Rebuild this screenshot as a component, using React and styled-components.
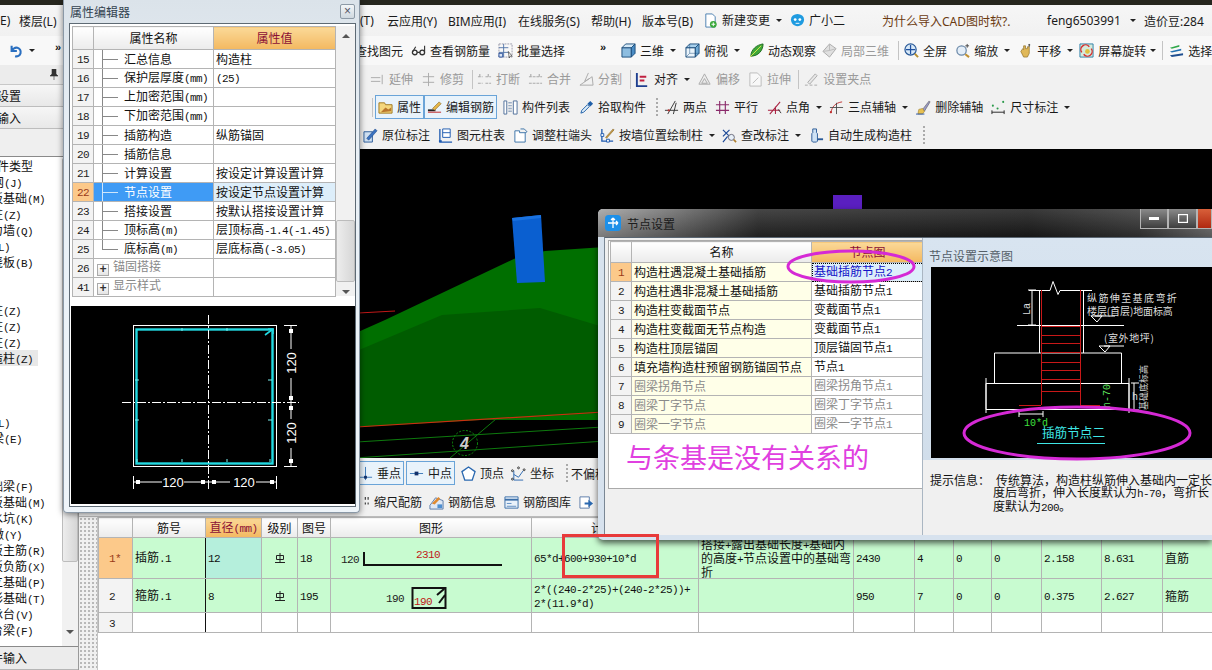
import React from "react";
import styled, { createGlobalStyle } from "styled-components";

const GlobalStyle = createGlobalStyle`
  html, body {
    margin: 0;
    padding: 0;
    background: #f0f0f0;
    overflow: hidden;
    font-family: "Noto Sans CJK SC", sans-serif;
    font-size: 12px;
    color: #111;
  }
`;

const glyphs = {
  undo: <path d="M3 2v6h6M3.5 8A5 5 0 1 1 7 14" stroke="#2a6fc0" strokeWidth="2.4" fill="none" />,
  newdoc: (
    <>
      <path d="M3 1h7l3 3v11H3z" fill="#fff" stroke="#4a7fb0" />
      <circle cx="11" cy="12" r="3.6" fill="#3aa83a" />
      <path d="M9 12h4M11 10v4" stroke="#fff" />
    </>
  ),
  guang: (
    <>
      <path d="M1 7a7 6 0 0 1 14 0c0 4-3 7-7 7S1 11 1 7z" fill="#1f9be0" />
      <circle cx="5.5" cy="7" r="1.5" fill="#fff" />
      <circle cx="10.5" cy="7" r="1.5" fill="#fff" />
      <path d="M6 11h4" stroke="#fff" />
    </>
  ),
  nodeapp: (
    <>
      <rect x="0" y="0" width="16" height="16" rx="3.5" fill="#1e90e8" />
      <path d="M8 3v10M3 8h10M8 3L6 5M8 3l2 2M13 8l-2-2M13 8l-2 2" stroke="#fff" strokeWidth="1.3" fill="none" />
    </>
  ),
  find: (
    <>
      <circle cx="4" cy="10" r="2.5" fill="none" stroke="#333" strokeWidth="1.4" />
      <circle cx="12" cy="10" r="2.5" fill="none" stroke="#333" strokeWidth="1.4" />
      <path d="M6.5 10h3M2 9l3-5M14.5 9V3" stroke="#333" strokeWidth="1.2" />
    </>
  ),
  batch: (
    <>
      <path d="M1 1h14v14H1z" fill="none" stroke="#99a" strokeDasharray="2 1" />
      <path d="M1 5h10M1 10h10M6 1v14" stroke="#5577aa" />
      <path d="M1 11h4v4H1z" fill="#d8e4f4" stroke="#2a4f9a" />
      <path d="M11 9l4 5-2 0-1 2z" fill="#fff" stroke="#333" strokeWidth=".7" />
    </>
  ),
  cube: (
    <>
      <path d="M1 5h10v10H1z" fill="#8dbde0" stroke="#1d4e7c" />
      <path d="M1 5l4-4h10l-4 4z" fill="#d5e9f7" stroke="#1d4e7c" />
      <path d="M11 5l4-4v10l-4 4z" fill="#4a8cc4" stroke="#1d4e7c" />
    </>
  ),
  wire: (
    <>
      <path d="M1 5h10v10H1z" fill="#eaf4fb" stroke="#1d4e7c" />
      <path d="M1 5l4-4h10l-4 4z" fill="#a8d0ec" stroke="#1d4e7c" />
      <path d="M11 5l4-4v10l-4 4z" fill="#6fa9d4" stroke="#1d4e7c" />
      <path d="M5 1v10h10M5 11l-4 4" stroke="#1d4e7c" strokeWidth=".5" fill="none" />
    </>
  ),
  orbit: (
    <>
      <path d="M2 14C2 7 8 2 15 1c0 7-5 13-13 13z" fill="#3fa83a" stroke="#1f6a1f" />
      <path d="M1 15L13 3" stroke="#d8e84a" />
    </>
  ),
  local3d: (
    <>
      <path d="M8 1l7 5-7 9-7-6z" fill="#e0e0e0" stroke="#aaa" />
      <path d="M8 1v7l7-2M8 8L1 9" stroke="#bbb" fill="none" />
    </>
  ),
  full: (
    <>
      <circle cx="7" cy="7" r="6" fill="#d7e8f7" stroke="#2a5a98" strokeWidth="1.3" />
      <path d="M7 2v10M2 7h10" stroke="#1e50a0" strokeWidth="1.3" />
      <path d="M11.5 11.5L15 15" stroke="#b89030" strokeWidth="2" />
    </>
  ),
  zoom: (
    <>
      <circle cx="7" cy="8" r="5" fill="#e4eef8" stroke="#6a88a8" strokeWidth="1.3" />
      <path d="M11 12l4 3" stroke="#c09030" strokeWidth="2.2" />
      <path d="M13 1v4M11 3h4" stroke="#444" />
    </>
  ),
  pan: (
    <>
      <path d="M3 9l2-3 1 1V3h2v3h2V4h2v7l-2 4H6z" fill="#e0b858" stroke="#8a6a20" strokeWidth=".7" />
      <path d="M12 1v3M11 2h2" stroke="#444" />
    </>
  ),
  rotate: (
    <>
      <path d="M1 1h14v14H1z" fill="#d6eadb" stroke="#2a7fa8" />
      <path d="M3 10a5 5 0 0 1 8-6" stroke="#d83030" strokeWidth="1.5" fill="none" />
      <path d="M13 6a5 5 0 0 1-8 6" stroke="#d83030" strokeWidth="1.5" fill="none" />
      <circle cx="9" cy="9" r="2.5" fill="#e0c040" />
    </>
  ),
  layers: (
    <>
      <path d="M1 5l10-3v2L3 6z" fill="#2fa84a" />
      <path d="M1 9l12-3v2L3 10z" fill="#1f6fb0" />
      <path d="M1 13l14-2v2L3 15z" fill="#1f4f90" />
    </>
  ),
  extend: <path d="M1 6h10M1 10h10M13 3v10" stroke="#aaa" strokeWidth="1" fill="none" />,
  trim: <path d="M2 5h12M2 11h12M8 1v14" stroke="#aaa" fill="none" />,
  cut: <path d="M1 5h5M9 5h6M1 12h5M9 12h6M3 2v3M12 2v3" stroke="#aaa" strokeWidth="1.2" strokeDasharray="3 1" fill="none" />,
  merge: <path d="M1 5h14M1 12h14M3 2v3M12 2v3" stroke="#aaa" strokeWidth="1.2" strokeDasharray="3 1" fill="none" />,
  split: <path d="M1 14h14L14 5 1 14M10 1l-4 9 5-3" stroke="#aaa" fill="none" />,
  align: (
    <>
      <path d="M2 1v14h11" stroke="#1e3f90" strokeWidth="2" fill="none" />
      <path d="M5 5h7M5 9h5" stroke="#c02040" strokeWidth="2" />
    </>
  ),
  offset: <path d="M2 13L8 2l6 11zM5 12l3-5 3 5z" fill="#ececec" stroke="#aaa" />,
  stretch: <path d="M2 1h8l4 4v10H2zM5 12l6-6" fill="#f8f8f8" stroke="#bbb" />,
  grip: <path d="M1 14h3M6 14h3M11 14h3M4 11l8-9 2 2-8 9z" fill="#e6e6e6" stroke="#aaa" />,
  prop: (
    <>
      <path d="M1 3h6l1 2h7v9H1z" fill="#f4d67c" stroke="#a07820" />
      <path d="M3 13l5-5 3 2 3-2v4z" fill="#b9762c" />
    </>
  ),
  edit: (
    <>
      <path d="M1 11h8" stroke="#222" strokeWidth="2" />
      <path d="M6 9l7-7 2 2-7 7z" fill="#e8b84a" stroke="#8a6a20" strokeWidth=".7" />
      <path d="M1 13h14" stroke="#c02020" />
    </>
  ),
  list: (
    <>
      <path d="M1 1h3v14H1zM11 1h4v14h-4z" fill="#fff" stroke="#4f6f9a" />
      <path d="M6 3h3M6 6h3M6 9h3M6 12h3" stroke="#4f6f9a" strokeDasharray="1 1" strokeWidth="1.5" />
    </>
  ),
  picker: (
    <>
      <path d="M2 14l1-3 6-6 2 2-6 6z" fill="#dcecf8" stroke="#1f5fa8" />
      <path d="M9 4l3-3 3 3-3 3z" fill="#1f5fa8" />
    </>
  ),
  twopoint: (
    <>
      <path d="M1 11h14M4 15l8-14M10 15L13 3" stroke="#333" fill="none" />
      <circle cx="5" cy="11" r="1.2" fill="#c03030" />
    </>
  ),
  parallel: <path d="M1 5h14M1 11h14M5 1v14M11 1v14" stroke="#8a2a6a" strokeWidth="1.2" fill="none" />,
  angle: (
    <>
      <path d="M1 11h13M3 15l11-13M9 15V7" stroke="#a82040" strokeWidth="1.1" fill="none" />
      <path d="M12 10l3 4" stroke="#333" />
    </>
  ),
  three: (
    <>
      <path d="M2 14C3 7 7 3 14 2" stroke="#c03030" fill="none" />
      <path d="M1 8h14M8 3v12" stroke="#444" strokeWidth=".9" />
      <circle cx="2" cy="13" r="1.2" fill="#c03030" />
    </>
  ),
  del: (
    <>
      <path d="M7 10l7-9 1 1-6 10z" fill="#9a9ac8" stroke="#555" strokeWidth=".6" />
      <path d="M3 10l4-1 2 3-2 3H2z" fill="#e8c050" stroke="#9a7a20" strokeWidth=".6" />
      <path d="M0 15h9" stroke="#2a5ab0" />
    </>
  ),
  dim: (
    <>
      <path d="M1 11v4M14 11v4M1 13h13" stroke="#222" />
      <circle cx="2" cy="6" r="1.1" fill="#2a9a4a" />
      <circle cx="7" cy="9" r="1.1" fill="#2a9a4a" />
      <circle cx="13" cy="2" r="1.1" fill="#2a9a4a" />
    </>
  ),
  inplace: (
    <>
      <path d="M1 4h9v11H1z" fill="#cfe0f2" stroke="#2a5a98" />
      <path d="M4 11l9-10 2 2-9 10z" fill="#3a72c0" stroke="#1e4a88" strokeWidth=".6" />
    </>
  ),
  coltable: (
    <>
      <path d="M2 1v14h13" stroke="#1e5ab0" strokeWidth="1.4" fill="none" />
      <path d="M5 1h8v9H5z" fill="#fff" stroke="#1e5ab0" />
      <path d="M5 5h8" stroke="#1e5ab0" />
      <path d="M1 13h3v2H1z" fill="#1e5ab0" />
    </>
  ),
  adjust: (
    <>
      <path d="M2 3h5v2h6v10H2z" fill="#fff" stroke="#3a72a8" />
      <path d="M8 1h4l3 3-2 1" stroke="#3a72a8" fill="none" />
    </>
  ),
  wallcol: (
    <>
      <path d="M2 1v13h12" stroke="#1e5ab0" strokeWidth="1.4" fill="none" />
      <path d="M1 6h3v3H1zM7 12h3v3H7z" fill="#fff" stroke="#1e5ab0" />
      <path d="M6 10l8-9 1 1-8 9z" fill="#d0a040" stroke="#7a5a20" strokeWidth=".6" />
    </>
  ),
  check: (
    <>
      <path d="M1 2l7 7M8 2L1 9M1 15l5-6" stroke="#1e4a98" strokeWidth="1.3" />
      <circle cx="10" cy="10" r="3.2" fill="#e8f0f8" stroke="#667" />
      <path d="M12.5 12.5L15 15" stroke="#b08030" strokeWidth="1.8" />
    </>
  ),
  autogen: (
    <>
      <path d="M4 1h4v4l1 1v8l-1 1H4l-1-1V6l1-1z" fill="#cfe2f4" stroke="#2a5a98" />
      <path d="M9 12h6" stroke="#2a5a98" strokeWidth="2" />
    </>
  ),
  perp: (
    <>
      <path d="M8 1v14M1 12h14" stroke="#3a78b8" />
      <rect x="6.5" y="10.5" width="3" height="3" fill="#12306a" />
    </>
  ),
  mid: (
    <>
      <path d="M1 8h14" stroke="#3a78b8" />
      <rect x="6" y="6" width="4" height="4" fill="#12306a" />
    </>
  ),
  vertex: <path d="M8 1l7 5-3 9H4L1 6z" fill="#fff" stroke="#2a68b0" strokeWidth="1.4" />,
  coord: (
    <>
      <path d="M3 15V5M3 15h10M3 9l5 3 5-7" stroke="#2a68b0" fill="none" />
      <circle cx="8" cy="2" r="1" fill="none" stroke="#333" />
      <circle cx="1.5" cy="5" r="1" fill="none" stroke="#333" />
      <circle cx="14" cy="4" r="1" fill="none" stroke="#333" />
      <circle cx="1.5" cy="14" r="1" fill="none" stroke="#333" />
    </>
  ),
  scale: <path d="M11 2v3M14 2v3M11 8v2M14 8v2" stroke="#333" strokeWidth="1.2" />,
  info: (
    <>
      <path d="M1 11L7 3l8 3v9H1z" fill="#dfe8f4" stroke="#5a7aa8" />
      <path d="M3 9l7-7 2 2-6 6z" fill="#e08a30" />
      <path d="M9 10h5v4H9z" fill="#4f8fd0" />
    </>
  ),
  lib: (
    <>
      <path d="M1 2h14v12H1z" fill="#eaf2fa" stroke="#3a6ea8" />
      <path d="M1 5h14" stroke="#3a6ea8" strokeWidth="2" />
      <path d="M3 9h5M3 12h10" stroke="#5a8abf" />
    </>
  ),
  next: (
    <>
      <path d="M1 2h10v12H1z" fill="#fff" stroke="#5a7aa8" />
      <path d="M6 8h4V5l5 4-5 4v-3H6z" fill="#2a68b0" />
    </>
  ),
};

const Glyph = styled.svg`
  flex: none;
  display: block;
  width: ${(p) => p.$size || 15}px;
  height: ${(p) => p.$size || 15}px;
`;

const Icon = ({ name, size }) => (
  <Glyph $size={size} viewBox="0 0 16 16">
    {glyphs[name]}
  </Glyph>
);

const Page = styled.div`
  position: relative;
  width: 1212px;
  height: 670px;
  overflow: hidden;
  display: flex;
  flex-direction: column;
  background: #f0f0f0;
`;

const TitleStrip = styled.div`
  height: 5px;
  flex: none;
  background: #26261e;
`;

const MenuBar = styled.div`
  height: 31px;
  flex: none;
  display: flex;
  align-items: center;
  background: linear-gradient(#f6f6f6, #f1f1f1);
  font-family: "Noto Sans", "Noto Sans CJK SC", sans-serif;
`;

const MenuItem = styled.span`
  flex: none;
  width: ${(p) => p.$w}px;
  margin-left: ${(p) => p.$ml || 0}px;
  white-space: nowrap;
  color: ${(p) => p.$color || "#1a1a1a"};
`;

const ToolRow = styled.div`
  height: ${(p) => p.$h || 28}px;
  flex: none;
  display: flex;
  align-items: center;
  padding-left: ${(p) => p.$pl || 0}px;
  background: ${(p) => p.$bg || "#f1f1f1"};
  white-space: nowrap;
  overflow: hidden;
`;

const ToolItem = styled.div`
  flex: none;
  display: flex;
  align-items: center;
  gap: 4px;
  height: 24px;
  box-sizing: border-box;
  margin-left: ${(p) => (p.$ml === undefined ? 8 : p.$ml)}px;
  padding: ${(p) => (p.$on ? "0 3px" : "0")};
  color: ${(p) => (p.$off ? "#9a9a9a" : "#1a1a1a")};
  background: ${(p) => (p.$on ? "#e9f3fb" : "transparent")};
  ${(p) => p.$on && "outline: 1px solid #6aa4d8; outline-offset: -1px;"}
  line-height: 24px;
`;

const Caret = styled.i`
  flex: none;
  width: 0;
  height: 0;
  margin-left: ${(p) => (p.$ml === undefined ? 2 : p.$ml)}px;
  border-left: 3px solid transparent;
  border-right: 3px solid transparent;
  border-top: 3px solid #222;
`;

const Sep = styled.i`
  flex: none;
  width: 1px;
  height: 19px;
  margin-left: ${(p) => p.$ml}px;
  background: #c4c4c4;
`;

const Dots = styled.i`
  flex: none;
  width: 2px;
  height: 18px;
  margin-left: ${(p) => p.$ml}px;
  background: repeating-linear-gradient(#aaa 0 2px, transparent 2px 4px);
`;

const More = styled.span`
  flex: none;
  width: 8px;
  margin-left: ${(p) => p.$ml}px;
  font-family: "Liberation Sans", sans-serif;
  font-size: 11px;
  font-weight: bold;
  line-height: 8px;
  margin-top: -8px;
`;

const Tool = ({ icon, label, ml, off, on, caret, caretMl }) => (
  <ToolItem $ml={ml} $off={off} $on={on}>
    <Icon name={icon} />
    <span>{label}</span>
    {caret && <Caret $ml={caretMl} />}
  </ToolItem>
);

const Body = styled.div`
  flex: 1;
  display: flex;
  min-height: 0;
`;

const LeftPanel = styled.div`
  width: 79px;
  flex: none;
  display: flex;
  flex-direction: column;
  overflow: hidden;
  border-right: 1px solid #9a9a9a;
  box-sizing: border-box;
`;

const PanelHead = styled.div`
  height: 19px;
  flex: none;
  display: flex;
  justify-content: flex-end;
  align-items: center;
  padding-right: 20px;
  background: #ececec;
  border-bottom: 1px solid #c8c8c8;
  font-size: 10px;
`;

const PanelTab = styled.div`
  height: 21px;
  flex: none;
  line-height: 21px;
  text-indent: -3px;
  background: linear-gradient(#f6f6f6, #e8e8e8);
  border-bottom: 1px solid #bdbdbd;
`;

const PanelGap = styled.div`
  height: 27px;
  flex: none;
  background: #efefef;
  border-bottom: 1px solid #8a8a8a;
`;

const ListWrap = styled.div`
  flex: 1;
  min-height: 0;
  display: flex;
  background: #fff;
  padding-top: 1px;
  border-bottom: 1px solid #8a8a8a;
`;

const TreeList = styled.div`
  flex: 1;
  min-width: 0;
  overflow: hidden;
`;

const TreeRow = styled.div`
  height: 16px;
  line-height: 16px;
  white-space: nowrap;
  width: ${(p) => (p.$sel ? "38px" : "auto")};
  background: ${(p) => (p.$sel ? "#e8e8e8" : "transparent")};
  span.t {
    margin-left: ${(p) => p.$ml || 0}px;
  }
`;

const ScrollTrack = styled.div`
  width: ${(p) => p.$w || 16}px;
  flex: none;
  display: flex;
  flex-direction: column;
  align-items: center;
  background: #f1f1f1;
  overflow: hidden;
`;

const ScrollThumb = styled.div`
  width: 100%;
  flex: none;
  box-sizing: border-box;
  height: ${(p) => p.$h}px;
  margin-top: ${(p) => p.$mt}px;
  background: linear-gradient(90deg, #ededed, #d6d6d6);
  border: 1px solid #bcbcbc;
  border-radius: 2px;
`;

const ScrollCaret = styled.i`
  flex: none;
  margin-top: ${(p) => p.$mt}px;
  width: 0;
  height: 0;
  border-left: 4px solid transparent;
  border-right: 4px solid transparent;
  ${(p) => (p.$up ? "border-bottom: 4px solid #555;" : "border-top: 4px solid #555;")}
`;

const PanelButton = styled.div`
  height: 22px;
  flex: none;
  line-height: 22px;
  text-indent: -9px;
  background: #ececec;
  border-bottom: 1px solid #b5b5b5;
`;

const Center = styled.div`
  flex: 1;
  min-width: 0;
  display: flex;
  flex-direction: column;
`;

const Canvas = styled.div`
  height: 309px;
  flex: none;
  background: #000;
  svg {
    display: block;
  }
`;

const TableArea = styled.div`
  flex: 1;
  min-height: 0;
  display: flex;
  align-items: flex-start;
  background: #fff;
  border-top: 1px solid #bbb;
`;

const Grip = styled.div`
  width: 19px;
  height: 100%;
  flex: none;
  background: #f0f0f0 radial-gradient(#b8b8b8 1px, transparent 1.2px) 0 0 / 4px 4px;
  border-right: 1px solid #c4c4c4;
  box-sizing: border-box;
`;

const Grid = styled.table`
  table-layout: fixed;
  border-collapse: collapse;
  width: ${(p) => p.$w}px;
  background: ${(p) => p.$bg || "#fff"};
  flex: none;
  align-self: flex-start;
  th,
  td {
    padding: 0 2px;
    border: 1px solid #b4b4b4;
    overflow: hidden;
    white-space: nowrap;
    font-weight: normal;
    line-height: 12px;
    font-size: 12px;
    box-sizing: border-box;
  }
`;

const HeadCell = styled.th`
  text-align: center;
  height: ${(p) => p.$h || 20}px;
  color: ${(p) => (p.$active ? "#8b1035" : "#111")};
  background: ${(p) =>
    p.$active ? "linear-gradient(#fbd998, #f3b860)" : "linear-gradient(#fff, #ebebeb)"};
`;

const NumCell = styled.td`
  text-align: ${(p) => (p.$pl ? "left" : "center")};
  ${(p) => p.$pl && `padding-left: ${p.$pl}px !important;`}
  background: ${(p) => (p.$active ? "#fcc98a" : "#f3f3f3")};
  color: ${(p) => (p.$active ? "#9a3a18" : "#222")};
`;

const GreenCell = styled.td`
  background: ${(p) => (p.$tint ? "#b5efdc" : "#c8fbd0")};
  ${(p) => p.$edge && "border-right: 1px solid #111 !important;"}
  svg {
    display: block;
  }
`;

const BlankCell = styled.td`
  background: #fff;
  ${(p) => p.$edge && "border-right: 1px solid #111 !important;"}
`;

const Row = styled.tr`
  height: ${(p) => p.$h}px;
`;

const GradeMark = styled.svg`
  display: block;
  width: 12px;
  height: 12px;
  margin: 0 auto;
`;

const Latin = styled.span`
  font-family: "Liberation Mono", monospace;
  font-size: 11px;
  letter-spacing: -0.6px;
`;

const Mix = ({ children }) => (
  <>
    {String(children)
      .split(/([\x20-\x7e]+)/)
      .map((s, i) => (/[\x20-\x7e]/.test(s) ? <Latin key={i}>{s}</Latin> : s))}
  </>
);

const Dialog = styled.div`
  position: absolute;
  box-sizing: border-box;
  display: flex;
  flex-direction: column;
  left: ${(p) => p.$x}px;
  top: ${(p) => p.$y}px;
  width: ${(p) => p.$w}px;
  height: ${(p) => p.$h}px;
`;

const PropDialog = styled(Dialog)`
  padding: 0 3px 5px 5px;
  background: linear-gradient(#dbe3ea, #e9f0f6 30%, #eef4f9);
  border: 1px solid #8a98a6;
  border-top: none;
  border-radius: 0 0 4px 4px;
  box-shadow: 0 1px 6px rgba(0, 0, 0, 0.5);
`;

const PropTitle = styled.div`
  height: 23px;
  flex: none;
  display: flex;
  align-items: center;
  justify-content: space-between;
  padding-left: 1px;
  color: #33424f;
`;

const CloseBox = styled.div`
  width: 15px;
  height: 15px;
  margin-right: 1px;
  box-sizing: border-box;
  border: 1px solid #8d9aa6;
  border-radius: 2px;
  background: linear-gradient(#f3f6f8, #cfd8df);
  color: #556;
  font-family: "Liberation Sans", sans-serif;
  font-size: 12px;
  line-height: 12px;
  text-align: center;
`;

const PropInner = styled.div`
  flex: 1;
  min-height: 0;
  display: flex;
  flex-direction: column;
  background: #fff;
  border: 1px solid #5e6a74;
  padding: 2px 0 2px 2px;
`;

const PropTop = styled.div`
  height: 270px;
  flex: none;
  display: flex;
  justify-content: space-between;
`;

const TreeCell = styled.td`
  position: relative;
  padding-left: 30px !important;
  background: ${(p) => (p.$sel ? "#3f9bf5" : "#fff")};
  color: ${(p) => (p.$sel ? "#fff" : "#111")};
  &::before {
    content: "";
    position: absolute;
    left: 8px;
    top: 0;
    bottom: ${(p) => (p.$last ? "50%" : "0")};
    width: 1px;
    background: ${(p) => (p.$sel ? "#cfe6fb" : "#888")};
  }
  &::after {
    content: "";
    position: absolute;
    left: 8px;
    top: 50%;
    width: 16px;
    height: 1px;
    background: ${(p) => (p.$sel ? "#cfe6fb" : "#888")};
  }
`;

const GroupCell = styled.td`
  color: #888;
`;

const PlusBox = styled.span`
  display: inline-block;
  box-sizing: border-box;
  width: 12px;
  height: 12px;
  margin: 0 4px 0 1px;
  vertical-align: -2px;
  border: 1px solid #aaa;
  background: linear-gradient(#fff, #e4e4e4);
  color: #333;
  font-family: "Liberation Mono", monospace;
  font-size: 12px;
  line-height: 10px;
  text-align: center;
  font-weight: bold;
`;

const ValueCell = styled.td`
  background: ${(p) => (p.$sel ? "#ddeefa" : "#fff")};
  color: ${(p) => p.$color || "#111"};
  ${(p) => p.$focus && "outline: 1px dotted #000; outline-offset: -1px;"}
`;

const NameCell = styled.td`
  background: #ffffe8;
  color: ${(p) => p.$color || "#111"};
`;

const Preview = styled.div`
  flex: 1;
  min-height: 0;
  margin: 10px 0 0 -1px;
  background: #000;
  svg {
    display: block;
  }
`;

const NodeDialog = styled(Dialog)`
  background: #d7e2ee;
  box-shadow: 0 3px 6px rgba(0, 0, 0, 0.65);
  border-radius: 5px 0 0 5px;
  padding-bottom: 5px;
`;

const NodeTitle = styled.div`
  height: 28px;
  flex: none;
  display: flex;
  align-items: center;
  padding-left: 7px;
  gap: 6px;
  border-radius: 5px 0 0 0;
  color: #1c1c1c;
  background: linear-gradient(rgba(255, 255, 255, 0.12), rgba(0, 0, 0, 0.25)),
    linear-gradient(90deg, #a4a4a4, #6f6f6f 12%, #2c2c2c 26%, #1e1e1e 70%, #3a3a3a 88%, #777);
`;

const WinButtons = styled.div`
  display: flex;
  margin-left: auto;
  height: 20px;
  align-self: flex-start;
`;

const WinButton = styled.div`
  width: ${(p) => p.$w}px;
  box-sizing: border-box;
  display: flex;
  align-items: center;
  justify-content: center;
  border: 1px solid #b4b4b4;
  border-top: none;
  background: ${(p) =>
    p.$close ? "linear-gradient(#d8603a, #b02810)" : "linear-gradient(#8a8a8a, #3e3e3e)"};
`;

const NodeInner = styled.div`
  flex: 1;
  min-height: 0;
  display: flex;
  margin-left: 6px;
  border-left: 1px solid #7a8794;
  border-top: 1px solid #5a6672;
  background: #f0f0f0;
`;

const NodeLeft = styled.div`
  width: 317px;
  flex: none;
  padding: 2px 0 0 3px;
  box-sizing: border-box;
`;

const NodeSheet = styled.div`
  height: 249px;
  box-sizing: border-box;
  background: #fff;
  border: 1px solid #aaa;
  border-right: none;
  padding-left: 1px;
`;

const Slogan = styled.div`
  margin: 9px 0 0 16px;
  font-size: 27px;
  line-height: 28px;
  color: #e040e0;
  white-space: nowrap;
`;

const NodeRight = styled.div`
  flex: 1;
  min-width: 0;
  display: flex;
  flex-direction: column;
  border-left: 1px solid #aab6c2;
  background: linear-gradient(#d8e4f0, #cfdce9);
`;

const DiagramLabel = styled.div`
  height: 29px;
  flex: none;
  line-height: 35px;
  padding-left: 6px;
  color: #555f68;
`;

const Diagram = styled.div`
  height: 191px;
  flex: none;
  margin-left: 8px;
  background: #000;
  svg {
    display: block;
  }
`;

const InfoBlock = styled.div`
  flex: 1;
  min-height: 0;
  display: flex;
  background: #f0f0f0;
  margin-top: 2px;
  padding: 14px 0 0 7px;
  white-space: nowrap;
  line-height: 12px;
`;

const InfoText = styled.div`
  margin-left: 3px;
`;

const InfoIndent = styled.span`
  margin-left: 3px;
`;

const Overlay = styled.svg`
  position: absolute;
  left: 0;
  top: 0;
  width: 1212px;
  height: 670px;
  pointer-events: none;
`;

const Mark = () => (
  <GradeMark viewBox="0 0 12 12">
    <path d="M2.5 3.5h7v4h-7zM6 1v9M1 10.5h10" fill="none" stroke="#222" strokeWidth="1" />
  </GradeMark>
);

const leftRows = [
  ["构件类型", -15], ["钢筋网(J)", -32], ["筏板基础(M)", -21], ["框柱(Z)", -21], ["剪力墙(Q)", -21], ["梁(L)", -20], ["现浇板(B)", -21],
  null, null,
  ["框柱(Z)", -21], ["暗柱(Z)", -21], ["端柱(Z)", -21], ["构造柱(Z)", -21, true],
  null, null, null,
  ["梁(L)", -20], ["连梁(E)", -20],
  null, null,
  ["基础梁(F)", -21], ["筏板基础(M)", -21], ["集水坑(K)", -21], ["柱墩(Y)", -20], ["筏板主筋(R)", -21], ["筏板负筋(X)", -21], ["独立基础(P)", -21], ["条形基础(T)", -21], ["桩承台(V)", -21], ["承台梁(F)", -21],
];

const propRows = [
  ["15", "汇总信息", "构造柱"],
  ["16", "保护层厚度(mm)", "(25)"],
  ["17", "上加密范围(mm)", ""],
  ["18", "下加密范围(mm)", ""],
  ["19", "插筋构造", "纵筋锚固"],
  ["20", "插筋信息", ""],
  ["21", "计算设置", "按设定计算设置计算"],
  ["22", "节点设置", "按设定节点设置计算"],
  ["23", "搭接设置", "按默认搭接设置计算"],
  ["24", "顶标高(m)", "层顶标高-1.4(-1.45)"],
  ["25", "底标高(m)", "层底标高(-3.05)"],
];

const nodeRows = [
  ["构造柱遇混凝土基础插筋", "基础插筋节点2"],
  ["构造柱遇非混凝土基础插筋", "基础插筋节点1"],
  ["构造柱变截面节点", "变截面节点1"],
  ["构造柱变截面无节点构造", "变截面节点1"],
  ["构造柱顶层锚固", "顶层锚固节点1"],
  ["填充墙构造柱预留钢筋锚固节点", "节点1"],
  ["圈梁拐角节点", "圈梁拐角节点1", true],
  ["圈梁丁字节点", "圈梁丁字节点1", true],
  ["圈梁一字节点", "圈梁一字节点1", true],
];

const rebarCols = [34, 73, 56, 36, 33, 201, 167, 155, 61, 39, 38, 50, 60, 61, 50];
const rebarHeads = ["", "筋号", "直径(mm)", "级别", "图号", "图形", "计算公式", "公式描述", "长度", "根数", "搭接", "损耗(%)", "单重(kg)", "总重(kg)", "钢筋归类"];

const StirrupShape = () => (
  <svg width="197" height="32" viewBox="332 579 197 32">
    <text x="385" y="601" fontSize="11" fontFamily="Liberation Mono" fill="#222" letterSpacing="-.6">190</text>
    <path d="M411.5 587h33v20h-33z M436 594l7-6 M438 602l6-8" fill="none" stroke="#111" strokeWidth="2" />
    <text x="413" y="604" fontSize="11" fontFamily="Liberation Mono" fill="#c01818" letterSpacing="-.6">190</text>
  </svg>
);

const DowelShape = () => (
  <svg width="197" height="38" viewBox="332 539 197 38">
    <text x="340" y="563" fontSize="11" fontFamily="Liberation Mono" fill="#222" letterSpacing="-.6">120</text>
    <path d="M363 552v13h138" fill="none" stroke="#111" strokeWidth="2" />
    <text x="415" y="558" fontSize="11" fontFamily="Liberation Mono" fill="#c01818" letterSpacing="-.6">2310</text>
  </svg>
);

const Viewport = () => (
  <svg width="1133" height="309" viewBox="79 149 1133 309">
    <rect x="833" y="195" width="29" height="20" fill="#5a1fc0" />
    <path d="M340 340L385 320 516 258 545 251 620 246V420H340z" fill="#006f00" />
    <path d="M340 358L442 315 540 308 620 332V412L340 428z" fill="#005c00" />
    <path d="M340 314L395 311" stroke="#c01818" fill="none" />
    <path d="M340 428L620 411" stroke="#c83010" fill="none" strokeWidth="1.2" />
    <path d="M340 443L620 426M340 459L620 440M450 458L496 419" stroke="#0e7a0e" fill="none" />
    <path d="M512 218L541 215 545 282 517 283z" fill="#0a5fd0" />
    <path d="M512 218L541 215 541 218 513 221z" fill="#1a72e0" />
    <circle cx="465" cy="443" r="12.5" fill="none" stroke="#0e8a0e" strokeDasharray="2 1.5" />
    <text x="460" y="449" fontSize="16" fontStyle="italic" fontWeight="bold" fontFamily="Liberation Sans" fill="#ccc">4</text>
  </svg>
);

const SectionDrawing = () => (
  <svg width="284" height="199" viewBox="71 306 284 199">
    <rect x="133.5" y="325.5" width="143" height="141" fill="none" stroke="#fff" />
    <rect x="136.5" y="329.5" width="136" height="134" fill="none" stroke="#22d8e0" strokeWidth="2.4" />
    <path d="M265 335l8-6M268 329h5v5" fill="none" stroke="#22d8e0" strokeWidth="1.6" />
    <path d="M208.5 315V491M122 402.5H299" stroke="#fff" strokeDasharray="9 2 2 2" fill="none" />
    <path d="M182 328v3M227 328v3M135 380h4M268 380h4M135 420h4M268 420h4M182 459v3M227 459v3M137 459v3M270 459v3" stroke="#7df0f0" />
    <path d="M284 325.5h13M284 466.5h13M291 325v24M291 378v41M291 448v18" stroke="#fff" fill="none" />
    <path d="M133.5 476v13M276.5 476v13M134 482h28M184 482h24M208 482h22M256 482h21" stroke="#fff" fill="none" />
    <path d="M289 329h4v4h-4zM289 396h4v4h-4zM289 406h4v4h-4zM289 459h4v4h-4zM136 480h4v4h-4zM201 480h4v4h-4zM212 480h4v4h-4zM270 480h4v4h-4z" fill="#fff" />
    <g fontFamily="Liberation Sans" fontSize="13" fill="#fff" textAnchor="middle">
      <text x="173" y="487">120</text>
      <text x="244" y="487">120</text>
      <text transform="translate(296 363) rotate(-90)">120</text>
      <text transform="translate(296 433) rotate(-90)">120</text>
    </g>
  </svg>
);

const NodeDrawing = () => (
  <svg width="281" height="191" viewBox="931 267 281 191">
    <g fill="none" stroke="#fff">
      <path d="M1029 290.5h21l3-9 5 13 2-4h32M1039.5 290v63M1083.5 290v63M1017 325.5h107" />
      <path d="M994.5 383v-30h127v30M986 383.5h143v26H986z" />
      <path d="M986 378v35M1129 378v35M1032 290v35M1028 290h8M1028 325h8" />
      <path d="M1134 383v27M1131 383h8M1131 410h8M1019 414h24M1019 411v6M1043 411v6" />
      <path d="M1097 322l5-6h-11zM1105 352l5-6h-11zM1095 316h20M1104 346h20" />
    </g>
    <path
      d="M1041.5 290v115M1080.5 290v115M1041 326.5h39M1041 335.5h39M1041 343.5h39M1041 352.5h39M1041 362.5h39M1041 370.5h39M1041 379.5h39M1041 391.5h39M1019 405.5h22M1080 405.5h20"
      fill="none"
      stroke="#c81818"
    />
    <g fontFamily="Noto Sans CJK SC" fontSize="10" fill="#ddd">
      <text x="1087" y="302" letterSpacing="1.4">纵筋伸至基底弯折</text>
      <text x="1087" y="315" letterSpacing="-.1">楼层(首层)地面标高</text>
      <text x="1104" y="342" letterSpacing=".6">(室外地坪)</text>
      <text transform="translate(1030 315) rotate(-90)" fontFamily="Liberation Mono">La</text>
      <text transform="translate(1147 410) rotate(-90)" fontSize="9">基础底标高</text>
      <text x="1132" y="400" fontFamily="Liberation Mono">h</text>
    </g>
    <text transform="translate(1110 408) rotate(-90)" fontSize="10" fontFamily="Liberation Mono" fill="#5de05d">h-70</text>
    <text x="1024" y="426" fontSize="10" fontFamily="Liberation Mono" fill="#3fe03f">10*d</text>
    <text x="1042" y="437" fontSize="12.6" fontFamily="Noto Sans CJK SC" fill="#3fe6e6">插筋节点二</text>
    <path d="M1037 443.5h68" stroke="#3fe6e6" />
  </svg>
);

const App = () => (
  <Page>
    <GlobalStyle />
    <TitleStrip />
    <MenuBar>
      <MenuItem $w={19}>E)</MenuItem>
      <MenuItem $w={38}>楼层(L)</MenuItem>
      <MenuItem $ml={303} $w={27}>(T)</MenuItem>
      <MenuItem $w={61}>云应用(Y)</MenuItem>
      <MenuItem $w={70}>BIM应用(I)</MenuItem>
      <MenuItem $w={73}>在线服务(S)</MenuItem>
      <MenuItem $w={51}>帮助(H)</MenuItem>
      <MenuItem $w={61}>版本号(B)</MenuItem>
      <Tool icon="newdoc" label="新建变更" ml={0} caret caretMl={2} />
      <Tool icon="guang" label="广小二" ml={8} />
      <MenuItem $ml={37} $w={165} $color="#6b3a10">为什么导入CAD图时软?.</MenuItem>
      <MenuItem $w={75}>feng6503991</MenuItem>
      <Caret $ml={8} />
      <MenuItem $ml={8} $w={62}>造价豆:284</MenuItem>
    </MenuBar>

    <ToolRow $h={29} $pl={9} $bg="#f8f8f8">
      <Icon name="undo" size={14} />
      <Caret $ml={6} />
      <More $ml={20}>»</More>
      <Tool icon="find" label="查找图元" ml={273} />
      <Tool icon="find" label="查看钢筋量" />
      <Tool icon="batch" label="批量选择" />
      <More $ml={35}>»</More>
      <Tool icon="cube" label="三维" ml={13} caret />
      <Tool icon="wire" label="俯视" ml={9} caret />
      <Tool icon="orbit" label="动态观察" ml={9} />
      <Tool icon="local3d" label="局部三维" ml={6} off />
      <Sep $ml={9} />
      <Tool icon="full" label="全屏" ml={5} />
      <Tool icon="zoom" label="缩放" caret />
      <Tool icon="pan" label="平移" ml={8} caret />
      <Tool icon="rotate" label="屏幕旋转" ml={6} caret caretMl={0} />
      <Sep $ml={6} />
      <Tool icon="layers" label="选择" ml={6} />
    </ToolRow>

    <Body>
      <LeftPanel>
        <PanelHead>
          <svg width="8" height="11" viewBox="0 0 8 11">
            <path d="M2 0h4v5l2 2H0l2-2zM4 7v4" fill="#333" stroke="#333" strokeWidth=".6" />
          </svg>
        </PanelHead>
        <PanelTab>设置</PanelTab>
        <PanelTab>输入</PanelTab>
        <PanelGap />
        <ListWrap>
          <TreeList>
            {leftRows.map((row, i) =>
              row ? (
                <TreeRow key={i} $ml={row[1]} $sel={row[2]}>
                  <span className="t">
                    <Mix>{row[0]}</Mix>
                  </span>
                </TreeRow>
              ) : (
                <TreeRow key={i} />
              )
            )}
          </TreeList>
          <ScrollTrack>
            <ScrollThumb $mt={0} $h={404} />
            <ScrollCaret $mt={68} />
          </ScrollTrack>
        </ListWrap>
        <PanelButton>件输入</PanelButton>
      </LeftPanel>

      <Center>
        <ToolRow>
          <Tool icon="extend" label="延伸" ml={291} off />
          <Tool icon="trim" label="修剪" off />
          <Sep $ml={8} />
          <Tool icon="cut" label="打断" ml={4} off />
          <Tool icon="merge" label="合并" off />
          <Tool icon="split" label="分割" off />
          <Sep $ml={8} />
          <Tool icon="align" label="对齐" ml={4} caret />
          <Tool icon="offset" label="偏移" ml={7} off />
          <Tool icon="stretch" label="拉伸" off />
          <Sep $ml={7} />
          <Tool icon="grip" label="设置夹点" ml={5} off />
        </ToolRow>
        <ToolRow>
          <Sep $ml={293} />
          <Tool icon="prop" label="属性" ml={2} on />
          <Tool icon="edit" label="编辑钢筋" ml={0} on />
          <Tool icon="list" label="构件列表" ml={6} />
          <Tool icon="picker" label="拾取构件" ml={9} />
          <Dots $ml={10} />
          <Tool icon="twopoint" label="两点" ml={6} />
          <Tool icon="parallel" label="平行" />
          <Tool icon="angle" label="点角" ml={9} caret />
          <Tool icon="three" label="三点辅轴" ml={7} caret />
          <Tool icon="del" label="删除辅轴" ml={8} />
          <Tool icon="dim" label="尺寸标注" caret />
        </ToolRow>
        <ToolRow>
          <Tool icon="inplace" label="原位标注" ml={284} />
          <Tool icon="coltable" label="图元柱表" />
          <Tool icon="adjust" label="调整柱端头" />
          <Tool icon="wallcol" label="按墙位置绘制柱" caret />
          <Tool icon="check" label="查改标注" ml={7} caret />
          <Tool icon="autogen" label="自动生成构造柱" />
          <Dots $ml={11} />
        </ToolRow>
        <Canvas>
          <Viewport />
        </Canvas>
        <ToolRow $h={30}>
          <Tool icon="perp" label="垂点" ml={276} on />
          <Tool icon="mid" label="中点" ml={2} on />
          <Tool icon="vertex" label="顶点" ml={6} />
          <Tool icon="coord" label="坐标" ml={7} />
          <Dots $ml={12} />
          <MenuItem $ml={3} $w={40}>不偏移</MenuItem>
        </ToolRow>
        <ToolRow>
          <Tool icon="scale" label="缩尺配筋" ml={276} />
          <Tool icon="info" label="钢筋信息" ml={7} />
          <Tool icon="lib" label="钢筋图库" />
          <Tool icon="next" label="" />
        </ToolRow>
        <TableArea>
          <Grip />
          <Grid $w={1114}>
            <colgroup>
              {rebarCols.map((w, i) => (
                <col key={i} width={w} />
              ))}
            </colgroup>
            <thead>
              <tr>
                {rebarHeads.map((h, i) => (
                  <HeadCell key={i} $active={i === 2}>
                    <Mix>{h}</Mix>
                  </HeadCell>
                ))}
              </tr>
            </thead>
            <tbody>
              <Row $h={40}>
                <NumCell $active $pl={10}><Mix>1*</Mix></NumCell>
                <GreenCell $edge>插筋<Mix>.1</Mix></GreenCell>
                <GreenCell $tint><Mix>12</Mix></GreenCell>
                <GreenCell><Mark /></GreenCell>
                <GreenCell><Mix>18</Mix></GreenCell>
                <GreenCell><DowelShape /></GreenCell>
                <GreenCell><Mix>65*d+600+930+10*d</Mix></GreenCell>
                <GreenCell>
                  搭接<Mix>+</Mix>露出基础长度<Mix>+</Mix>基础内<br />
                  的高度<Mix>+</Mix>节点设置中的基础弯<br />
                  折
                </GreenCell>
                <GreenCell><Mix>2430</Mix></GreenCell>
                <GreenCell><Mix>4</Mix></GreenCell>
                <GreenCell><Mix>0</Mix></GreenCell>
                <GreenCell><Mix>0</Mix></GreenCell>
                <GreenCell><Mix>2.158</Mix></GreenCell>
                <GreenCell><Mix>8.631</Mix></GreenCell>
                <GreenCell>直筋</GreenCell>
              </Row>
              <Row $h={34}>
                <NumCell $pl={10}><Mix>2</Mix></NumCell>
                <GreenCell $edge>箍筋<Mix>.1</Mix></GreenCell>
                <GreenCell><Mix>8</Mix></GreenCell>
                <GreenCell><Mark /></GreenCell>
                <GreenCell><Mix>195</Mix></GreenCell>
                <GreenCell><StirrupShape /></GreenCell>
                <GreenCell>
                  <Mix>2*((240-2*25)+(240-2*25))+</Mix><br />
                  <Mix>2*(11.9*d)</Mix>
                </GreenCell>
                <GreenCell />
                <GreenCell><Mix>950</Mix></GreenCell>
                <GreenCell><Mix>7</Mix></GreenCell>
                <GreenCell><Mix>0</Mix></GreenCell>
                <GreenCell><Mix>0</Mix></GreenCell>
                <GreenCell><Mix>0.375</Mix></GreenCell>
                <GreenCell><Mix>2.627</Mix></GreenCell>
                <GreenCell>箍筋</GreenCell>
              </Row>
              <Row $h={20}>
                <NumCell $pl={10}><Mix>3</Mix></NumCell>
                <BlankCell $edge />
                {rebarCols.slice(2).map((w, i) => (
                  <BlankCell key={i} />
                ))}
              </Row>
            </tbody>
          </Grid>
        </TableArea>
      </Center>
    </Body>

    <PropDialog $x={63} $y={0} $w={297} $h={513}>
      <PropTitle>
        属性编辑器
        <CloseBox>×</CloseBox>
      </PropTitle>
      <PropInner>
        <PropTop>
          <Grid $w={263}>
            <colgroup>
              <col width="21" />
              <col width="120" />
              <col width="122" />
            </colgroup>
            <thead>
              <tr>
                <HeadCell $h={23} />
                <HeadCell $h={23}>属性名称</HeadCell>
                <HeadCell $h={23} $active>属性值</HeadCell>
              </tr>
            </thead>
            <tbody>
              {propRows.map((r, i) => (
                <Row key={r[0]} $h={19}>
                  <NumCell $active={r[0] === "22"}><Mix>{r[0]}</Mix></NumCell>
                  <TreeCell $sel={r[0] === "22"} $last={i === propRows.length - 1}>
                    <Mix>{r[1]}</Mix>
                  </TreeCell>
                  <ValueCell $sel={r[0] === "22"}><Mix>{r[2]}</Mix></ValueCell>
                </Row>
              ))}
              <Row $h={19}>
                <NumCell><Mix>26</Mix></NumCell>
                <GroupCell><PlusBox>+</PlusBox>锚固搭接</GroupCell>
                <ValueCell />
              </Row>
              <Row $h={19}>
                <NumCell><Mix>41</Mix></NumCell>
                <GroupCell><PlusBox>+</PlusBox>显示样式</GroupCell>
                <ValueCell />
              </Row>
            </tbody>
          </Grid>
          <ScrollTrack $w={19}>
            <ScrollCaret $up $mt={8} />
            <ScrollThumb $mt={182} $h={62} />
            <ScrollCaret $mt={8} />
          </ScrollTrack>
        </PropTop>
        <Preview>
          <SectionDrawing />
        </Preview>
      </PropInner>
    </PropDialog>

    <NodeDialog $x={598} $y={209} $w={614} $h={331}>
      <NodeTitle>
        <Icon name="nodeapp" size={16} />
        节点设置
        <WinButtons>
          <WinButton $w={28}>
            <svg width="10" height="4"><rect width="10" height="3" fill="#fff" /></svg>
          </WinButton>
          <WinButton $w={29}>
            <svg width="10" height="9"><rect x=".5" y=".5" width="9" height="8" fill="none" stroke="#fff" strokeWidth="1.4" /></svg>
          </WinButton>
          <WinButton $w={15} $close />
        </WinButtons>
      </NodeTitle>
      <NodeInner>
        <NodeLeft>
          <NodeSheet>
            <Grid $w={313}>
              <colgroup>
                <col width="21" />
                <col width="180" />
                <col width="112" />
              </colgroup>
              <thead>
                <tr>
                  <HeadCell $h={21} />
                  <HeadCell $h={21}>名称</HeadCell>
                  <HeadCell $h={21} $active>节点图</HeadCell>
                </tr>
              </thead>
              <tbody>
                {nodeRows.map((r, i) => (
                  <Row key={r[0]} $h={19}>
                    <NumCell $active={i === 0}><Mix>{i + 1}</Mix></NumCell>
                    <NameCell $color={r[2] ? "#8a8a8a" : "#111"}>{r[0]}</NameCell>
                    <ValueCell
                      $sel={i === 0}
                      $focus={i === 0}
                      $color={i === 0 ? "#1414c8" : r[2] ? "#8a8a8a" : "#111"}
                    >
                      <Mix>{r[1]}</Mix>
                    </ValueCell>
                  </Row>
                ))}
              </tbody>
            </Grid>
            <Slogan>与条基是没有关系的</Slogan>
          </NodeSheet>
        </NodeLeft>
        <NodeRight>
          <DiagramLabel>节点设置示意图</DiagramLabel>
          <Diagram>
            <NodeDrawing />
          </Diagram>
          <InfoBlock>
            提示信息：
            <InfoText>
              <InfoIndent>传统算法，构造柱纵筋伸入基础内一定长</InfoIndent><br />
              度后弯折，伸入长度默认为<Mix>h-70</Mix>，弯折长<br />
              度默认为<Mix>200</Mix>。
            </InfoText>
          </InfoBlock>
        </NodeRight>
      </NodeInner>
    </NodeDialog>

    <Overlay viewBox="0 0 1212 670">
      <rect x="563.5" y="535.5" width="94" height="41" fill="none" stroke="#e83a3a" strokeWidth="3" />
      <ellipse cx="851" cy="266.5" rx="63" ry="15.5" fill="none" stroke="#d529d5" strokeWidth="3" />
      <ellipse cx="1077" cy="433" rx="113" ry="26" fill="none" stroke="#d529d5" strokeWidth="3" />
    </Overlay>
  </Page>
);

export default App;
